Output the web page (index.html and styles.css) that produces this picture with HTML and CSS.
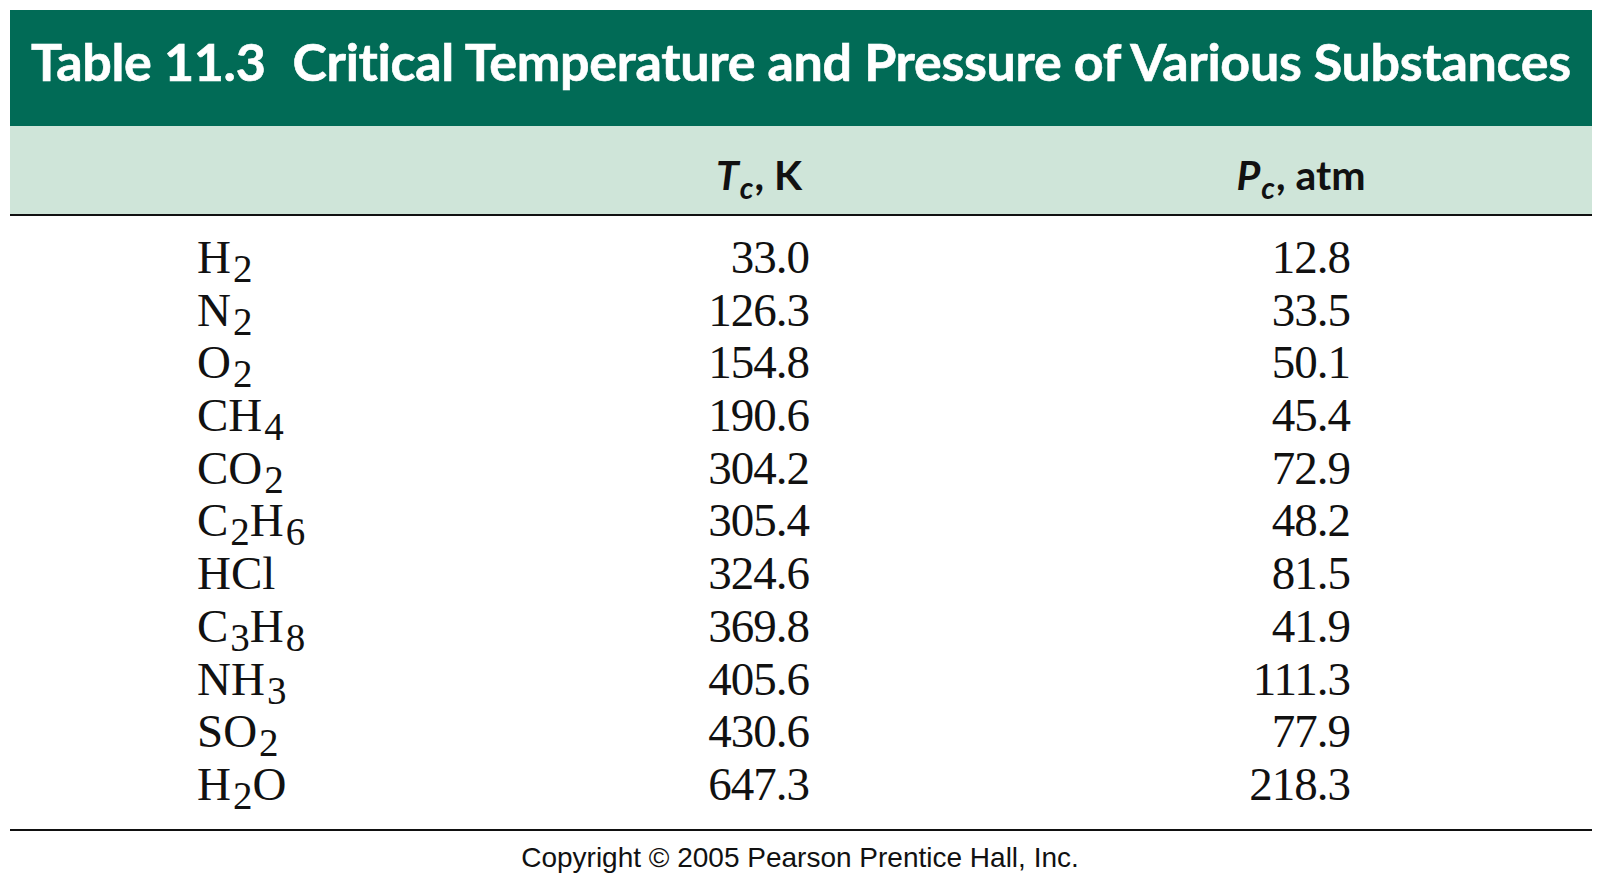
FILE: index.html
```html
<!DOCTYPE html>
<html lang="en">
<head>
<meta charset="utf-8">
<title>Table 11.3 Critical Temperature and Pressure of Various Substances</title>
<link rel="stylesheet" href="styles.css">
</head>
<body>
<div class="sheet">
  <div class="title"><span class="num">Table 11.3</span>Critical Temperature and Pressure of Various Substances</div>
  <div class="head">
    <span class="hc tc"><i>T</i><sub>c</sub>, K</span>
    <span class="hc pc"><i>P</i><sub>c</sub>, atm</span>
  </div>
  <div class="body">
    <div class="row"><span class="name">H<sub>2</sub></span><span class="v tc">33.0</span><span class="v pc">12.8</span></div>
    <div class="row"><span class="name">N<sub>2</sub></span><span class="v tc">126.3</span><span class="v pc">33.5</span></div>
    <div class="row"><span class="name">O<sub>2</sub></span><span class="v tc">154.8</span><span class="v pc">50.1</span></div>
    <div class="row"><span class="name">CH<sub>4</sub></span><span class="v tc">190.6</span><span class="v pc">45.4</span></div>
    <div class="row"><span class="name">CO<sub>2</sub></span><span class="v tc">304.2</span><span class="v pc">72.9</span></div>
    <div class="row"><span class="name">C<sub>2</sub>H<sub>6</sub></span><span class="v tc">305.4</span><span class="v pc">48.2</span></div>
    <div class="row"><span class="name">HCl</span><span class="v tc">324.6</span><span class="v pc">81.5</span></div>
    <div class="row"><span class="name">C<sub>3</sub>H<sub>8</sub></span><span class="v tc">369.8</span><span class="v pc">41.9</span></div>
    <div class="row"><span class="name">NH<sub>3</sub></span><span class="v tc">405.6</span><span class="v pc">111.3</span></div>
    <div class="row"><span class="name">SO<sub>2</sub></span><span class="v tc">430.6</span><span class="v pc">77.9</span></div>
    <div class="row"><span class="name">H<sub>2</sub>O</span><span class="v tc">647.3</span><span class="v pc">218.3</span></div>
  </div>
</div>
<p class="copy">Copyright © 2005 Pearson Prentice Hall, Inc.</p>
</body>
</html>
```
FILE: styles.css
```css
html, body {
  margin: 0;
  padding: 0;
  background: #ffffff;
}

.sheet {
  margin: 10px 0 0 10px;
  width: 1582px;
}

.title {
  box-sizing: border-box;
  height: 116px;
  padding: 19px 0 0 21px;
  background: #016b56;
  color: #ffffff;
  font-family: Lato, "Open Sans", sans-serif;
  font-weight: 700;
  font-size: 52px;
  letter-spacing: -0.3px;
  line-height: 64px;
  white-space: nowrap;
  -webkit-text-stroke: 0.6px #ffffff;
}

.title .num {
  margin-right: 27px;
}

.head,
.row {
  display: grid;
  grid-template-columns: 187px 482px 160px 382px 160px;
}

.head {
  box-sizing: border-box;
  height: 90px;
  padding-top: 25px;
  background: #cfe5d9;
  border-bottom: 2px solid #111111;
  font-family: Lato, "Open Sans", sans-serif;
  font-weight: 700;
  font-size: 41px;
  line-height: 48px;
  color: #111111;
}

.hc {
  text-align: center;
  white-space: nowrap;
}

.hc i {
  font-style: italic;
}

.hc sub {
  font-style: italic;
  font-size: 30px;
  line-height: 0;
  vertical-align: -9px;
  margin-left: 1px;
  margin-right: 1px;
}

.tc { grid-column: 3; }
.pc { grid-column: 5; }

.body {
  padding: 15px 0 18px;
  border-bottom: 2px solid #111111;
  font-family: "Liberation Serif", "Times New Roman", serif;
  font-size: 47px;
  color: #111111;
}

.row {
  height: 52.7px;
  line-height: 52.7px;
}

.name {
  grid-column: 2;
  white-space: nowrap;
}

.name sub {
  font-size: 39px;
  line-height: 0;
  vertical-align: -9px;
  margin-left: 2px;
}

.v {
  text-align: right;
  letter-spacing: -1px;
}

.v.tc { padding-right: 30px; }
.v.pc { padding-right: 31px; }

.copy {
  margin: 11px 0 0;
  text-align: center;
  font-family: "Liberation Sans", Arial, sans-serif;
  font-size: 28px;
  line-height: 32px;
  color: #111111;
}
```
